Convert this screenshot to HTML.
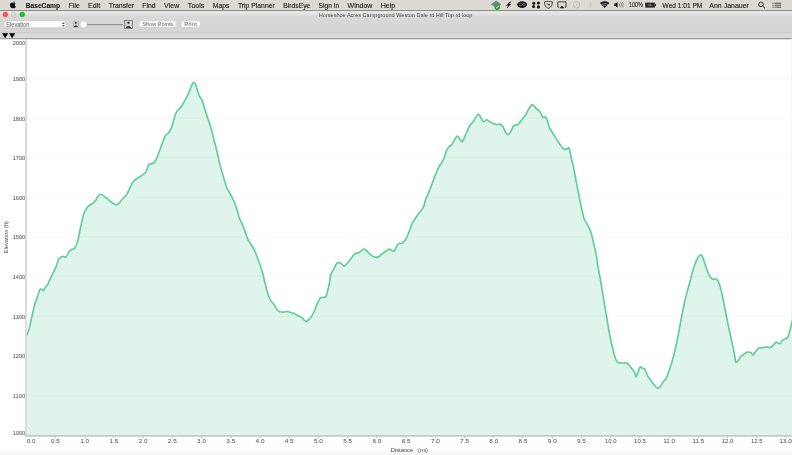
<!DOCTYPE html>
<html><head><meta charset="utf-8">
<style>
*{margin:0;padding:0;box-sizing:border-box}
html,body{width:792px;height:455px;overflow:hidden;background:#fff;font-family:"Liberation Sans",sans-serif}
svg{position:absolute;left:0;top:0;font-family:"Liberation Sans",sans-serif;will-change:transform}
.g{stroke:#000;stroke-opacity:0.03;stroke-width:1}
.t{stroke:#a8a8a8;stroke-width:1}
.m{font-size:7.5px;fill:#1a1a1a;stroke:#1a1a1a;stroke-width:0.12px}
.yl{font-size:6.2px;fill:#4a4a4a}
.xl{font-size:6.2px;fill:#4a4a4a}
</style></head><body>
<svg width="792" height="455" viewBox="0 0 792 455">
  <defs>
    <linearGradient id="tb" x1="0" y1="0" x2="0" y2="1">
      <stop offset="0" stop-color="#e7e7e7"/><stop offset="0.12" stop-color="#e4e4e4"/><stop offset="0.25" stop-color="#d8d8d8"/><stop offset="1" stop-color="#d5d5d5"/>
    </linearGradient>
    <linearGradient id="bt" x1="0" y1="0" x2="0" y2="1"><stop offset="0" stop-color="#ffffff"/><stop offset="1" stop-color="#f3f3f3"/></linearGradient>
    <linearGradient id="st" x1="0" y1="0" x2="0" y2="1"><stop offset="0" stop-color="#d8d8d8"/><stop offset="0.7" stop-color="#d9d9d9"/><stop offset="1" stop-color="#e0e0e0"/></linearGradient>
  </defs>
  <!-- menubar -->
  <rect x="0" y="0" width="792" height="10" fill="#dddad3"/>
  <rect x="0" y="10" width="792" height="1" fill="#8f8d89"/>
  <path d="M13.2,2.9 C12.7,2.9 12.3,2.6 11.8,2.6 C10.8,2.6 10,3.5 10,4.9 C10,6.4 11,8.3 11.9,8.3 C12.4,8.3 12.6,8 13.1,8 C13.6,8 13.8,8.3 14.3,8.3 C15,8.3 15.6,7.3 15.9,6.5 C15.2,6.2 14.8,5.6 14.8,4.8 C14.8,4.1 15.2,3.6 15.7,3.3 C15.3,2.8 14.7,2.6 14.2,2.6 C13.8,2.6 13.5,2.9 13.2,2.9 Z M13.3,2.4 C13.3,1.8 13.8,1.1 14.5,1 C14.6,1.7 14,2.4 13.3,2.4 Z" fill="#111"/>
  <text x="25.65" y="7.70" textLength="34.50" lengthAdjust="spacingAndGlyphs" class="m" font-weight="bold"  xml:space="preserve">BaseCamp</text><text x="68.85" y="7.70" textLength="10.80" lengthAdjust="spacingAndGlyphs" class="m"  xml:space="preserve">File</text><text x="88.05" y="7.70" textLength="12.30" lengthAdjust="spacingAndGlyphs" class="m"  xml:space="preserve">Edit</text><text x="108.75" y="7.70" textLength="25.40" lengthAdjust="spacingAndGlyphs" class="m"  xml:space="preserve">Transfer</text><text x="142.35" y="7.70" textLength="13.30" lengthAdjust="spacingAndGlyphs" class="m"  xml:space="preserve">Find</text><text x="164.05" y="7.70" textLength="15.20" lengthAdjust="spacingAndGlyphs" class="m"  xml:space="preserve">View</text><text x="187.85" y="7.70" textLength="16.50" lengthAdjust="spacingAndGlyphs" class="m"  xml:space="preserve">Tools</text><text x="212.75" y="7.70" textLength="16.80" lengthAdjust="spacingAndGlyphs" class="m"  xml:space="preserve">Maps</text><text x="237.95" y="7.70" textLength="36.80" lengthAdjust="spacingAndGlyphs" class="m"  xml:space="preserve">Trip Planner</text><text x="283.35" y="7.70" textLength="27.00" lengthAdjust="spacingAndGlyphs" class="m"  xml:space="preserve">BirdsEye</text><text x="318.55" y="7.70" textLength="20.70" lengthAdjust="spacingAndGlyphs" class="m"  xml:space="preserve">Sign In</text><text x="347.55" y="7.70" textLength="24.80" lengthAdjust="spacingAndGlyphs" class="m"  xml:space="preserve">Window</text><text x="380.65" y="7.70" textLength="14.70" lengthAdjust="spacingAndGlyphs" class="m"  xml:space="preserve">Help</text><text x="662.55" y="7.70" textLength="39.70" lengthAdjust="spacingAndGlyphs" class="m"  xml:space="preserve">Wed 1:01 PM</text><text x="709.25" y="7.70" textLength="39.70" lengthAdjust="spacingAndGlyphs" class="m"  xml:space="preserve">Ann Janauer</text><text x="628.95" y="6.90" textLength="13.80" lengthAdjust="spacingAndGlyphs" class="m" font-size="6.0"  xml:space="preserve">100%</text>
  <!-- garmin express-like icon -->
<path d="M491.3,4.3 L496.1,0.9 L500.9,4.3 L496.1,7.4 Z" fill="#6a8598" stroke="#4f6a7e" stroke-width="0.4"/>
<circle cx="497.2" cy="7.2" r="2.7" fill="#34a52c"/>
<path d="M495.9,7.1 L496.9,8 L498.6,5.9" stroke="#fff" stroke-width="0.7" fill="none"/>
<!-- lightning -->
<path d="M509.9,1.7 L506.5,5.5 L508.4,5.5 L507,7.9 L510.9,4 L509,4 L510.9,1.7 Z" fill="#111" stroke="#111" stroke-width="0.3"/>
<!-- creative cloud -->
<ellipse cx="522.1" cy="4.6" rx="4.9" ry="3.4" fill="#1a1a1a"/>
<path d="M519.2,5 C519.2,3.2 521.8,2.9 522.4,4.4 C523,6 525.3,5.8 525.2,4.2 C525.1,2.9 523.2,2.8 522.4,4.4 C521.6,6 519.2,6.2 519.2,5 Z" stroke="#8a8a8a" stroke-width="0.55" fill="none"/>
<!-- dropbox-ish -->
<circle cx="533.8" cy="3.3" r="1.5" fill="#111"/><circle cx="538.4" cy="3.1" r="1.5" fill="#111"/>
<circle cx="533.6" cy="6.6" r="1.5" fill="#111"/><circle cx="538.4" cy="6.9" r="1.6" fill="#111"/>
<!-- shield -->
<path d="M544.6,1.8 C546.2,1.2 550.6,1.2 552.3,1.8 C552.5,5 551.2,7.6 548.4,8.3 C545.6,7.6 544.3,5 544.6,1.8 Z" fill="none" stroke="#3a3a3a" stroke-width="0.9"/>
<circle cx="549" cy="4.6" r="0.9" fill="#222"/><circle cx="547.3" cy="4" r="0.6" fill="#444"/>
<!-- airplay -->
<path d="M559.2,7.2 L557.8,7.2 L557.8,1.9 L566,1.9 L566,7.2 L564.6,7.2" fill="none" stroke="#333" stroke-width="0.9"/>
<path d="M559.6,8.2 L561.9,5.5 L564.2,8.2 Z" fill="#111"/>
<!-- time machine faded -->
<circle cx="576.6" cy="4.8" r="3.3" fill="none" stroke="#b9b8b4" stroke-width="0.8"/>
<path d="M576.6,3 L576.6,5 L577.8,5.8" stroke="#b9b8b4" stroke-width="0.6" fill="none"/>
<!-- bluetooth faded -->
<path d="M588.8,3 L592,6.3 L590.4,7.7 L590.4,1.7 L592,3.1 L588.8,6.5" fill="none" stroke="#c6c5c1" stroke-width="0.6"/>
<!-- wifi -->
<path d="M604.7,8 L599.9,3 C602.5,0.6 606.9,0.6 609.5,3 Z" fill="#222"/>
<path d="M601.5,4.6 C603.3,3.2 606.1,3.2 607.9,4.6" stroke="#e4e2dd" stroke-width="0.5" fill="none"/>
<path d="M602.8,6 C603.9,5.1 605.5,5.1 606.6,6" stroke="#e4e2dd" stroke-width="0.5" fill="none"/>
<!-- volume -->
<path d="M614.3,3.6 L615.6,3.6 L617.6,1.9 L617.6,7.7 L615.6,6 L614.3,6 Z" fill="#111"/>
<path d="M619,3.3 C619.7,4.2 619.7,5.4 619,6.3 M620.5,2.5 C621.6,3.9 621.6,5.7 620.5,7.1 M622,1.8 C623.6,3.7 623.6,5.9 622,7.8" stroke="#333" stroke-width="0.5" fill="none"/>
<!-- battery -->
<rect x="645.2" y="2.6" width="9.6" height="5" fill="#2a2a2a"/>
<rect x="654.8" y="3.9" width="1.1" height="2.4" fill="#2a2a2a"/>
<path d="M648,5.1 L652.5,5.1 M650.2,3.8 L650.2,6.4" stroke="#bbb" stroke-width="0.5"/>
<!-- search -->
<circle cx="761" cy="4.4" r="2.3" fill="none" stroke="#222" stroke-width="0.9"/>
<path d="M762.7,6.1 L765,8.3" stroke="#222" stroke-width="1"/>
<!-- list -->
<path d="M772.4,3.2 L773.6,3.2 M772.4,5.2 L773.6,5.2 M772.4,7.2 L773.6,7.2 M774.6,3.2 L781.2,3.2 M774.6,5.2 L781.2,5.2 M774.6,7.2 L781.2,7.2" stroke="#222" stroke-width="0.75"/>

  <!-- titlebar / toolbar -->
  <rect x="0" y="11" width="792" height="22" fill="url(#tb)"/>
  <rect x="0" y="32" width="792" height="1" fill="#cbcbcb"/>
  <rect x="0" y="33" width="792" height="5" fill="url(#st)"/>
  <rect x="0" y="38" width="792" height="1" fill="#9f9f9f"/>
  <rect x="0" y="39" width="792" height="1" fill="#e6e6e6"/>
  <circle cx="5.3" cy="14.4" r="2.7" fill="#fc5753"/>
  <circle cx="13.7" cy="14.4" r="2.5" fill="#d6d6d6" stroke="#c4c4c4" stroke-width="0.5"/>
  <circle cx="22.3" cy="14.4" r="2.7" fill="#1dbd3a"/>
  <text x="318.85" y="16.70" textLength="153.60" lengthAdjust="spacingAndGlyphs" font-size="5.6" fill="#505050"  xml:space="preserve">Horseshoe Acres Campground Weston Dale rd Hill Top rd loop</text>
  <!-- dropdown -->
  <rect x="4.2" y="21" width="62" height="7" rx="1.5" fill="#000" opacity="0.12" transform="translate(0,0.5)"/>
  <rect x="4.2" y="20.9" width="61.7" height="6.9" rx="1.5" fill="#fdfdfd" stroke="#c4c4c4" stroke-width="0.4"/>
  <path d="M61.9,23.9 L63.35,21.9 L64.8,23.9 Z M61.9,25 L63.35,27 L64.8,25 Z" fill="#5e5e5e"/>
  <!-- slider -->
  <rect x="73.2" y="21.2" width="5.6" height="6" fill="#cdcdcd" stroke="#a4a4a4" stroke-width="0.5"/>
  <circle cx="75.9" cy="23" r="0.9" fill="#444"/><path d="M73.9,27 C74.2,25 77.6,25 77.9,27 Z" fill="#333"/>
  <rect x="86" y="24" width="37" height="1.2" fill="#939393"/>
  <circle cx="83.8" cy="25" r="3.8" fill="#000" opacity="0.12"/>
  <circle cx="83.6" cy="24.5" r="3.5" fill="#ffffff" stroke="#bdbdbd" stroke-width="0.35"/>
  <rect x="124.4" y="20.4" width="8" height="8" fill="#d0d0d0" stroke="#777" stroke-width="0.8"/>
  <circle cx="128.4" cy="22.8" r="1.1" fill="#333"/><path d="M125.8,28 C126,25.2 130.8,25.2 131,28 Z" fill="#333"/>
  <!-- buttons -->
  <rect x="139.6" y="21.8" width="36" height="6" rx="1.5" fill="#000" opacity="0.12"/>
  <rect x="139.6" y="21.2" width="36" height="6" rx="1.5" fill="#fcfcfc"/>
  <rect x="181.5" y="21.8" width="18.4" height="6" rx="1.5" fill="#000" opacity="0.12"/>
  <rect x="181.5" y="21.2" width="18.4" height="6" rx="1.5" fill="#fcfcfc"/>
  <text x="6.35" y="26.70" textLength="23.00" lengthAdjust="spacingAndGlyphs" font-size="6.4" fill="#5a5a5a"  xml:space="preserve">Elevation</text><text x="142.25" y="26.10" textLength="31.00" lengthAdjust="spacingAndGlyphs" font-size="5.6" fill="#5f5f5f"  xml:space="preserve">Show Points</text><text x="184.15" y="26.10" textLength="12.80" lengthAdjust="spacingAndGlyphs" font-size="5.6" fill="#5f5f5f"  xml:space="preserve">Print</text>
  <!-- triangles -->
  <path d="M2,33.2 L8.2,33.2 L5.1,38.2 Z M9,33.2 L15.2,33.2 L12.1,38.2 Z" fill="#000"/>
  <!-- plot -->
  <rect x="0" y="449" width="792" height="6" fill="url(#bt)"/>
  <rect x="791" y="39" width="1" height="397" fill="#eef8f3"/>
  <path d="M26.60,335.20 C26.97,334.33 28.08,332.37 28.80,330.00 C29.52,327.63 30.13,324.33 30.90,321.00 C31.67,317.67 32.75,312.75 33.40,310.00 C34.05,307.25 34.07,306.90 34.80,304.50 C35.53,302.10 36.97,298.08 37.80,295.60 C38.63,293.12 39.15,290.67 39.80,289.60 C40.45,288.53 41.05,289.03 41.70,289.20 C42.35,289.37 43.03,291.02 43.70,290.60 C44.37,290.18 45.03,287.68 45.70,286.70 C46.37,285.72 46.72,286.52 47.70,284.70 C48.68,282.88 50.28,278.60 51.60,275.80 C52.92,273.00 54.38,270.72 55.60,267.90 C56.82,265.08 57.70,260.82 58.90,258.90 C60.10,256.98 61.65,256.72 62.80,256.40 C63.95,256.08 64.80,257.73 65.80,257.00 C66.80,256.27 67.82,253.27 68.80,252.00 C69.78,250.73 70.72,250.05 71.70,249.40 C72.68,248.75 73.70,249.48 74.70,248.10 C75.70,246.72 76.72,244.57 77.70,241.10 C78.68,237.63 79.62,231.73 80.60,227.30 C81.58,222.87 82.60,217.63 83.60,214.50 C84.60,211.37 85.62,210.05 86.60,208.50 C87.58,206.95 88.52,206.02 89.50,205.20 C90.48,204.38 91.50,204.37 92.50,203.60 C93.50,202.83 94.52,201.92 95.50,200.60 C96.48,199.28 97.48,196.75 98.40,195.70 C99.32,194.65 100.02,194.20 101.00,194.30 C101.98,194.40 103.08,195.42 104.30,196.30 C105.52,197.18 107.13,198.62 108.30,199.60 C109.47,200.58 110.32,201.47 111.30,202.20 C112.28,202.93 113.22,203.60 114.20,204.00 C115.18,204.40 116.37,204.73 117.20,204.60 C118.03,204.47 118.38,204.10 119.20,203.20 C120.02,202.30 120.95,200.52 122.10,199.20 C123.25,197.88 124.95,196.87 126.10,195.30 C127.25,193.73 127.85,192.03 129.00,189.80 C130.15,187.57 131.67,183.82 133.00,181.90 C134.33,179.98 135.68,179.23 137.00,178.30 C138.32,177.37 139.58,177.18 140.90,176.30 C142.22,175.42 143.92,174.05 144.90,173.00 C145.88,171.95 146.13,171.45 146.80,170.00 C147.47,168.55 147.73,165.47 148.90,164.30 C150.07,163.13 152.48,164.05 153.80,163.00 C155.12,161.95 155.80,160.15 156.80,158.00 C157.80,155.85 158.82,152.73 159.80,150.10 C160.78,147.47 161.72,144.67 162.70,142.20 C163.68,139.73 164.70,136.88 165.70,135.30 C166.70,133.72 167.78,133.85 168.70,132.70 C169.62,131.55 170.38,130.43 171.20,128.40 C172.02,126.37 172.80,123.07 173.60,120.50 C174.40,117.93 175.18,114.82 176.00,113.00 C176.82,111.18 177.58,110.73 178.50,109.60 C179.42,108.47 180.50,107.62 181.50,106.20 C182.50,104.78 183.52,102.83 184.50,101.10 C185.48,99.37 186.42,97.85 187.40,95.80 C188.38,93.75 189.47,90.95 190.40,88.80 C191.33,86.65 192.18,83.72 193.00,82.90 C193.82,82.08 194.58,82.75 195.30,83.90 C196.02,85.05 196.63,87.82 197.30,89.80 C197.97,91.78 198.47,93.98 199.30,95.80 C200.13,97.62 201.32,98.23 202.30,100.70 C203.28,103.17 204.22,107.47 205.20,110.60 C206.18,113.73 207.22,116.53 208.20,119.50 C209.18,122.47 210.12,124.95 211.10,128.40 C212.08,131.85 213.10,136.25 214.10,140.20 C215.10,144.15 216.12,147.98 217.10,152.10 C218.08,156.22 218.90,160.62 220.00,164.90 C221.10,169.18 222.58,174.00 223.70,177.80 C224.82,181.60 225.72,185.23 226.70,187.70 C227.68,190.17 228.45,190.47 229.60,192.60 C230.75,194.73 232.43,197.87 233.60,200.50 C234.77,203.13 235.62,205.43 236.60,208.40 C237.58,211.37 238.35,215.17 239.50,218.30 C240.65,221.43 242.18,223.90 243.50,227.20 C244.82,230.50 246.12,235.22 247.40,238.10 C248.68,240.98 249.97,242.37 251.20,244.50 C252.43,246.63 253.70,248.52 254.80,250.90 C255.90,253.28 256.65,255.65 257.80,258.80 C258.95,261.95 260.58,266.18 261.70,269.80 C262.82,273.42 263.68,277.22 264.50,280.50 C265.32,283.78 265.85,286.75 266.60,289.50 C267.35,292.25 268.20,294.98 269.00,297.00 C269.80,299.02 270.72,300.57 271.40,301.60 C272.08,302.63 272.42,302.30 273.10,303.20 C273.78,304.10 274.72,305.80 275.50,307.00 C276.28,308.20 277.08,309.62 277.80,310.40 C278.52,311.18 278.85,311.42 279.80,311.70 C280.75,311.98 282.23,312.13 283.50,312.10 C284.77,312.07 286.08,311.40 287.40,311.50 C288.72,311.60 290.25,312.37 291.40,312.70 C292.55,313.03 293.32,313.03 294.30,313.50 C295.28,313.97 296.13,314.90 297.30,315.50 C298.47,316.10 300.32,316.50 301.30,317.10 C302.28,317.70 302.45,318.38 303.20,319.10 C303.95,319.82 304.97,321.25 305.80,321.40 C306.63,321.55 307.32,320.72 308.20,320.00 C309.08,319.28 310.12,318.52 311.10,317.10 C312.08,315.68 313.10,313.65 314.10,311.50 C315.10,309.35 316.12,306.40 317.10,304.20 C318.08,302.00 319.02,299.45 320.00,298.30 C320.98,297.15 322.00,297.63 323.00,297.30 C324.00,296.97 325.02,298.27 326.00,296.30 C326.98,294.33 328.08,289.12 328.90,285.50 C329.72,281.88 330.07,277.40 330.90,274.60 C331.73,271.80 332.92,270.58 333.90,268.70 C334.88,266.82 335.82,264.30 336.80,263.30 C337.78,262.30 338.97,262.57 339.80,262.70 C340.63,262.83 341.05,263.53 341.80,264.10 C342.55,264.67 343.32,266.33 344.30,266.10 C345.28,265.87 346.47,264.08 347.70,262.70 C348.93,261.32 350.55,259.28 351.70,257.80 C352.85,256.32 353.45,254.63 354.60,253.80 C355.75,252.97 357.42,253.37 358.60,252.80 C359.78,252.23 360.78,251.03 361.70,250.40 C362.62,249.77 363.10,248.77 364.10,249.00 C365.10,249.23 366.45,250.68 367.70,251.80 C368.95,252.92 370.45,254.85 371.60,255.70 C372.75,256.55 373.45,256.70 374.60,256.90 C375.75,257.10 377.18,257.48 378.50,256.90 C379.82,256.32 381.18,254.38 382.50,253.40 C383.82,252.42 385.32,251.73 386.40,251.00 C387.48,250.27 388.10,249.10 389.00,249.00 C389.90,248.90 390.92,250.07 391.80,250.40 C392.68,250.73 393.38,251.88 394.30,251.00 C395.22,250.12 396.47,246.35 397.30,245.10 C398.13,243.85 398.47,243.83 399.30,243.50 C400.13,243.17 401.15,243.93 402.30,243.10 C403.45,242.27 405.05,240.42 406.20,238.50 C407.35,236.58 408.22,234.07 409.20,231.60 C410.18,229.13 411.12,225.83 412.10,223.70 C413.08,221.57 414.10,220.38 415.10,218.80 C416.10,217.22 417.12,215.52 418.10,214.20 C419.08,212.88 420.02,212.28 421.00,210.90 C421.98,209.52 423.27,207.72 424.00,205.90 C424.73,204.08 424.43,202.67 425.40,200.00 C426.37,197.33 428.58,192.90 429.80,189.90 C431.02,186.90 431.72,184.63 432.70,182.00 C433.68,179.37 434.70,176.57 435.70,174.10 C436.70,171.63 437.72,169.08 438.70,167.20 C439.68,165.32 440.72,164.28 441.60,162.80 C442.48,161.32 443.17,160.37 444.00,158.30 C444.83,156.23 445.68,152.38 446.60,150.40 C447.52,148.42 448.62,147.38 449.50,146.40 C450.38,145.42 451.07,145.58 451.90,144.50 C452.73,143.42 453.58,141.32 454.50,139.90 C455.42,138.48 456.52,136.13 457.40,136.00 C458.28,135.87 458.97,138.18 459.80,139.10 C460.63,140.02 461.48,142.08 462.40,141.50 C463.32,140.92 464.32,137.73 465.30,135.60 C466.28,133.47 467.47,130.52 468.30,128.70 C469.13,126.88 469.48,125.87 470.30,124.70 C471.12,123.53 472.22,123.02 473.20,121.70 C474.18,120.38 475.30,118.05 476.20,116.80 C477.10,115.55 477.83,114.03 478.60,114.20 C479.37,114.37 479.98,116.55 480.80,117.80 C481.62,119.05 482.52,121.37 483.50,121.70 C484.48,122.03 485.62,119.73 486.70,119.80 C487.78,119.87 488.78,121.45 490.00,122.10 C491.22,122.75 492.83,123.27 494.00,123.70 C495.17,124.13 496.02,124.63 497.00,124.70 C497.98,124.77 498.92,123.77 499.90,124.10 C500.88,124.43 501.92,125.28 502.90,126.70 C503.88,128.12 504.92,131.28 505.80,132.60 C506.68,133.92 507.37,134.77 508.20,134.60 C509.03,134.43 509.87,133.08 510.80,131.60 C511.73,130.12 512.65,126.85 513.80,125.70 C514.95,124.55 516.38,125.68 517.70,124.70 C519.02,123.72 520.38,121.45 521.70,119.80 C523.02,118.15 524.52,116.45 525.60,114.80 C526.68,113.15 527.20,111.57 528.20,109.90 C529.20,108.23 530.63,105.48 531.60,104.80 C532.57,104.12 533.17,105.13 534.00,105.80 C534.83,106.47 535.68,107.88 536.60,108.80 C537.52,109.72 538.62,110.15 539.50,111.30 C540.38,112.45 541.30,114.63 541.90,115.70 C542.50,116.77 542.57,117.53 543.10,117.70 C543.63,117.87 544.45,116.38 545.10,116.70 C545.75,117.02 546.28,117.80 547.00,119.60 C547.72,121.40 548.50,125.35 549.40,127.50 C550.30,129.65 551.42,130.85 552.40,132.50 C553.38,134.15 554.32,135.85 555.30,137.40 C556.28,138.95 557.30,140.32 558.30,141.80 C559.30,143.28 560.32,145.05 561.30,146.30 C562.28,147.55 563.28,148.87 564.20,149.30 C565.12,149.73 565.97,149.07 566.80,148.90 C567.63,148.73 568.48,146.92 569.20,148.30 C569.92,149.68 570.38,154.07 571.10,157.20 C571.82,160.33 572.60,162.80 573.50,167.10 C574.40,171.40 575.45,177.58 576.50,183.00 C577.55,188.42 578.60,193.87 579.80,199.60 C581.00,205.33 582.55,213.43 583.70,217.40 C584.85,221.37 585.55,221.08 586.70,223.40 C587.85,225.72 589.45,228.02 590.60,231.30 C591.75,234.58 592.60,238.82 593.60,243.10 C594.60,247.38 595.90,253.22 596.60,257.00 C597.30,260.78 597.10,261.70 597.80,265.80 C598.50,269.90 599.82,276.00 600.80,281.60 C601.78,287.20 602.72,293.47 603.70,299.40 C604.68,305.33 605.67,311.13 606.70,317.20 C607.73,323.27 608.88,330.55 609.90,335.80 C610.92,341.05 611.82,344.75 612.80,348.70 C613.78,352.65 614.90,357.20 615.80,359.50 C616.70,361.80 617.22,361.90 618.20,362.50 C619.18,363.10 620.28,363.00 621.70,363.10 C623.12,363.20 625.38,362.65 626.70,363.10 C628.02,363.55 628.62,364.68 629.60,365.80 C630.58,366.92 631.77,368.70 632.60,369.80 C633.43,370.90 634.00,371.22 634.60,372.40 C635.20,373.58 635.62,377.00 636.20,376.90 C636.78,376.80 637.45,373.45 638.10,371.80 C638.75,370.15 639.37,367.57 640.10,367.00 C640.83,366.43 641.77,368.07 642.50,368.40 C643.23,368.73 643.85,368.23 644.50,369.00 C645.15,369.77 645.75,371.62 646.40,373.00 C647.05,374.38 647.57,375.98 648.40,377.30 C649.23,378.62 650.42,379.58 651.40,380.90 C652.38,382.22 653.25,383.98 654.30,385.20 C655.35,386.42 656.70,387.93 657.70,388.20 C658.70,388.47 659.38,387.88 660.30,386.80 C661.22,385.72 662.22,383.12 663.20,381.70 C664.18,380.28 665.20,380.18 666.20,378.30 C667.20,376.42 668.22,373.20 669.20,370.40 C670.18,367.60 671.12,364.97 672.10,361.50 C673.08,358.03 674.10,353.88 675.10,349.60 C676.10,345.32 676.97,341.55 678.10,335.80 C679.23,330.05 680.78,320.85 681.90,315.10 C683.02,309.35 683.82,305.58 684.80,301.30 C685.78,297.02 686.80,293.20 687.80,289.40 C688.80,285.60 689.82,282.12 690.80,278.50 C691.78,274.88 692.72,270.82 693.70,267.70 C694.68,264.58 695.70,261.85 696.70,259.80 C697.70,257.75 698.82,256.07 699.70,255.40 C700.58,254.73 701.18,254.58 702.00,255.80 C702.82,257.02 703.67,260.07 704.60,262.70 C705.53,265.33 706.62,269.18 707.60,271.60 C708.58,274.02 709.58,275.88 710.50,277.20 C711.42,278.52 712.27,279.28 713.10,279.50 C713.93,279.72 714.62,278.17 715.50,278.50 C716.38,278.83 717.42,279.35 718.40,281.50 C719.38,283.65 720.50,287.82 721.40,291.40 C722.30,294.98 722.90,298.57 723.80,303.00 C724.70,307.43 726.05,314.22 726.80,318.00 C727.55,321.78 727.55,322.12 728.30,325.70 C729.05,329.28 730.30,334.88 731.30,339.50 C732.30,344.12 733.58,349.70 734.30,353.40 C735.02,357.10 735.05,360.32 735.60,361.70 C736.15,363.08 736.83,362.43 737.60,361.70 C738.37,360.97 739.28,358.43 740.20,357.30 C741.12,356.17 742.02,355.72 743.10,354.90 C744.18,354.08 745.43,352.82 746.70,352.40 C747.97,351.98 749.65,351.98 750.70,352.40 C751.75,352.82 752.12,355.13 753.00,354.90 C753.88,354.67 755.00,352.15 756.00,351.00 C757.00,349.85 757.85,348.53 759.00,348.00 C760.15,347.47 761.58,348.00 762.90,347.80 C764.22,347.60 765.68,346.80 766.90,346.80 C768.12,346.80 769.15,348.08 770.20,347.80 C771.25,347.52 772.18,346.05 773.20,345.10 C774.22,344.15 775.22,342.30 776.30,342.10 C777.38,341.90 778.70,344.17 779.70,343.90 C780.70,343.63 781.42,341.30 782.30,340.50 C783.18,339.70 784.12,339.60 785.00,339.10 C785.88,338.60 786.83,338.75 787.60,337.50 C788.37,336.25 788.93,333.90 789.60,331.60 C790.27,329.30 791.03,325.97 791.60,323.70 C792.17,321.43 792.77,318.95 793.00,318.00 L793,436 L26.6,436 Z" fill="#dff5eb"/>
  <line x1="27" y1="395.5" x2="792" y2="395.5" class="g"/><line x1="27" y1="355.9" x2="792" y2="355.9" class="g"/><line x1="27" y1="316.2" x2="792" y2="316.2" class="g"/><line x1="27" y1="276.6" x2="792" y2="276.6" class="g"/><line x1="27" y1="237.0" x2="792" y2="237.0" class="g"/><line x1="27" y1="197.4" x2="792" y2="197.4" class="g"/><line x1="27" y1="157.7" x2="792" y2="157.7" class="g"/><line x1="27" y1="118.1" x2="792" y2="118.1" class="g"/><line x1="27" y1="78.5" x2="792" y2="78.5" class="g"/><line x1="27" y1="38.9" x2="792" y2="38.9" class="g"/>
  <path d="M26.60,335.20 C26.97,334.33 28.08,332.37 28.80,330.00 C29.52,327.63 30.13,324.33 30.90,321.00 C31.67,317.67 32.75,312.75 33.40,310.00 C34.05,307.25 34.07,306.90 34.80,304.50 C35.53,302.10 36.97,298.08 37.80,295.60 C38.63,293.12 39.15,290.67 39.80,289.60 C40.45,288.53 41.05,289.03 41.70,289.20 C42.35,289.37 43.03,291.02 43.70,290.60 C44.37,290.18 45.03,287.68 45.70,286.70 C46.37,285.72 46.72,286.52 47.70,284.70 C48.68,282.88 50.28,278.60 51.60,275.80 C52.92,273.00 54.38,270.72 55.60,267.90 C56.82,265.08 57.70,260.82 58.90,258.90 C60.10,256.98 61.65,256.72 62.80,256.40 C63.95,256.08 64.80,257.73 65.80,257.00 C66.80,256.27 67.82,253.27 68.80,252.00 C69.78,250.73 70.72,250.05 71.70,249.40 C72.68,248.75 73.70,249.48 74.70,248.10 C75.70,246.72 76.72,244.57 77.70,241.10 C78.68,237.63 79.62,231.73 80.60,227.30 C81.58,222.87 82.60,217.63 83.60,214.50 C84.60,211.37 85.62,210.05 86.60,208.50 C87.58,206.95 88.52,206.02 89.50,205.20 C90.48,204.38 91.50,204.37 92.50,203.60 C93.50,202.83 94.52,201.92 95.50,200.60 C96.48,199.28 97.48,196.75 98.40,195.70 C99.32,194.65 100.02,194.20 101.00,194.30 C101.98,194.40 103.08,195.42 104.30,196.30 C105.52,197.18 107.13,198.62 108.30,199.60 C109.47,200.58 110.32,201.47 111.30,202.20 C112.28,202.93 113.22,203.60 114.20,204.00 C115.18,204.40 116.37,204.73 117.20,204.60 C118.03,204.47 118.38,204.10 119.20,203.20 C120.02,202.30 120.95,200.52 122.10,199.20 C123.25,197.88 124.95,196.87 126.10,195.30 C127.25,193.73 127.85,192.03 129.00,189.80 C130.15,187.57 131.67,183.82 133.00,181.90 C134.33,179.98 135.68,179.23 137.00,178.30 C138.32,177.37 139.58,177.18 140.90,176.30 C142.22,175.42 143.92,174.05 144.90,173.00 C145.88,171.95 146.13,171.45 146.80,170.00 C147.47,168.55 147.73,165.47 148.90,164.30 C150.07,163.13 152.48,164.05 153.80,163.00 C155.12,161.95 155.80,160.15 156.80,158.00 C157.80,155.85 158.82,152.73 159.80,150.10 C160.78,147.47 161.72,144.67 162.70,142.20 C163.68,139.73 164.70,136.88 165.70,135.30 C166.70,133.72 167.78,133.85 168.70,132.70 C169.62,131.55 170.38,130.43 171.20,128.40 C172.02,126.37 172.80,123.07 173.60,120.50 C174.40,117.93 175.18,114.82 176.00,113.00 C176.82,111.18 177.58,110.73 178.50,109.60 C179.42,108.47 180.50,107.62 181.50,106.20 C182.50,104.78 183.52,102.83 184.50,101.10 C185.48,99.37 186.42,97.85 187.40,95.80 C188.38,93.75 189.47,90.95 190.40,88.80 C191.33,86.65 192.18,83.72 193.00,82.90 C193.82,82.08 194.58,82.75 195.30,83.90 C196.02,85.05 196.63,87.82 197.30,89.80 C197.97,91.78 198.47,93.98 199.30,95.80 C200.13,97.62 201.32,98.23 202.30,100.70 C203.28,103.17 204.22,107.47 205.20,110.60 C206.18,113.73 207.22,116.53 208.20,119.50 C209.18,122.47 210.12,124.95 211.10,128.40 C212.08,131.85 213.10,136.25 214.10,140.20 C215.10,144.15 216.12,147.98 217.10,152.10 C218.08,156.22 218.90,160.62 220.00,164.90 C221.10,169.18 222.58,174.00 223.70,177.80 C224.82,181.60 225.72,185.23 226.70,187.70 C227.68,190.17 228.45,190.47 229.60,192.60 C230.75,194.73 232.43,197.87 233.60,200.50 C234.77,203.13 235.62,205.43 236.60,208.40 C237.58,211.37 238.35,215.17 239.50,218.30 C240.65,221.43 242.18,223.90 243.50,227.20 C244.82,230.50 246.12,235.22 247.40,238.10 C248.68,240.98 249.97,242.37 251.20,244.50 C252.43,246.63 253.70,248.52 254.80,250.90 C255.90,253.28 256.65,255.65 257.80,258.80 C258.95,261.95 260.58,266.18 261.70,269.80 C262.82,273.42 263.68,277.22 264.50,280.50 C265.32,283.78 265.85,286.75 266.60,289.50 C267.35,292.25 268.20,294.98 269.00,297.00 C269.80,299.02 270.72,300.57 271.40,301.60 C272.08,302.63 272.42,302.30 273.10,303.20 C273.78,304.10 274.72,305.80 275.50,307.00 C276.28,308.20 277.08,309.62 277.80,310.40 C278.52,311.18 278.85,311.42 279.80,311.70 C280.75,311.98 282.23,312.13 283.50,312.10 C284.77,312.07 286.08,311.40 287.40,311.50 C288.72,311.60 290.25,312.37 291.40,312.70 C292.55,313.03 293.32,313.03 294.30,313.50 C295.28,313.97 296.13,314.90 297.30,315.50 C298.47,316.10 300.32,316.50 301.30,317.10 C302.28,317.70 302.45,318.38 303.20,319.10 C303.95,319.82 304.97,321.25 305.80,321.40 C306.63,321.55 307.32,320.72 308.20,320.00 C309.08,319.28 310.12,318.52 311.10,317.10 C312.08,315.68 313.10,313.65 314.10,311.50 C315.10,309.35 316.12,306.40 317.10,304.20 C318.08,302.00 319.02,299.45 320.00,298.30 C320.98,297.15 322.00,297.63 323.00,297.30 C324.00,296.97 325.02,298.27 326.00,296.30 C326.98,294.33 328.08,289.12 328.90,285.50 C329.72,281.88 330.07,277.40 330.90,274.60 C331.73,271.80 332.92,270.58 333.90,268.70 C334.88,266.82 335.82,264.30 336.80,263.30 C337.78,262.30 338.97,262.57 339.80,262.70 C340.63,262.83 341.05,263.53 341.80,264.10 C342.55,264.67 343.32,266.33 344.30,266.10 C345.28,265.87 346.47,264.08 347.70,262.70 C348.93,261.32 350.55,259.28 351.70,257.80 C352.85,256.32 353.45,254.63 354.60,253.80 C355.75,252.97 357.42,253.37 358.60,252.80 C359.78,252.23 360.78,251.03 361.70,250.40 C362.62,249.77 363.10,248.77 364.10,249.00 C365.10,249.23 366.45,250.68 367.70,251.80 C368.95,252.92 370.45,254.85 371.60,255.70 C372.75,256.55 373.45,256.70 374.60,256.90 C375.75,257.10 377.18,257.48 378.50,256.90 C379.82,256.32 381.18,254.38 382.50,253.40 C383.82,252.42 385.32,251.73 386.40,251.00 C387.48,250.27 388.10,249.10 389.00,249.00 C389.90,248.90 390.92,250.07 391.80,250.40 C392.68,250.73 393.38,251.88 394.30,251.00 C395.22,250.12 396.47,246.35 397.30,245.10 C398.13,243.85 398.47,243.83 399.30,243.50 C400.13,243.17 401.15,243.93 402.30,243.10 C403.45,242.27 405.05,240.42 406.20,238.50 C407.35,236.58 408.22,234.07 409.20,231.60 C410.18,229.13 411.12,225.83 412.10,223.70 C413.08,221.57 414.10,220.38 415.10,218.80 C416.10,217.22 417.12,215.52 418.10,214.20 C419.08,212.88 420.02,212.28 421.00,210.90 C421.98,209.52 423.27,207.72 424.00,205.90 C424.73,204.08 424.43,202.67 425.40,200.00 C426.37,197.33 428.58,192.90 429.80,189.90 C431.02,186.90 431.72,184.63 432.70,182.00 C433.68,179.37 434.70,176.57 435.70,174.10 C436.70,171.63 437.72,169.08 438.70,167.20 C439.68,165.32 440.72,164.28 441.60,162.80 C442.48,161.32 443.17,160.37 444.00,158.30 C444.83,156.23 445.68,152.38 446.60,150.40 C447.52,148.42 448.62,147.38 449.50,146.40 C450.38,145.42 451.07,145.58 451.90,144.50 C452.73,143.42 453.58,141.32 454.50,139.90 C455.42,138.48 456.52,136.13 457.40,136.00 C458.28,135.87 458.97,138.18 459.80,139.10 C460.63,140.02 461.48,142.08 462.40,141.50 C463.32,140.92 464.32,137.73 465.30,135.60 C466.28,133.47 467.47,130.52 468.30,128.70 C469.13,126.88 469.48,125.87 470.30,124.70 C471.12,123.53 472.22,123.02 473.20,121.70 C474.18,120.38 475.30,118.05 476.20,116.80 C477.10,115.55 477.83,114.03 478.60,114.20 C479.37,114.37 479.98,116.55 480.80,117.80 C481.62,119.05 482.52,121.37 483.50,121.70 C484.48,122.03 485.62,119.73 486.70,119.80 C487.78,119.87 488.78,121.45 490.00,122.10 C491.22,122.75 492.83,123.27 494.00,123.70 C495.17,124.13 496.02,124.63 497.00,124.70 C497.98,124.77 498.92,123.77 499.90,124.10 C500.88,124.43 501.92,125.28 502.90,126.70 C503.88,128.12 504.92,131.28 505.80,132.60 C506.68,133.92 507.37,134.77 508.20,134.60 C509.03,134.43 509.87,133.08 510.80,131.60 C511.73,130.12 512.65,126.85 513.80,125.70 C514.95,124.55 516.38,125.68 517.70,124.70 C519.02,123.72 520.38,121.45 521.70,119.80 C523.02,118.15 524.52,116.45 525.60,114.80 C526.68,113.15 527.20,111.57 528.20,109.90 C529.20,108.23 530.63,105.48 531.60,104.80 C532.57,104.12 533.17,105.13 534.00,105.80 C534.83,106.47 535.68,107.88 536.60,108.80 C537.52,109.72 538.62,110.15 539.50,111.30 C540.38,112.45 541.30,114.63 541.90,115.70 C542.50,116.77 542.57,117.53 543.10,117.70 C543.63,117.87 544.45,116.38 545.10,116.70 C545.75,117.02 546.28,117.80 547.00,119.60 C547.72,121.40 548.50,125.35 549.40,127.50 C550.30,129.65 551.42,130.85 552.40,132.50 C553.38,134.15 554.32,135.85 555.30,137.40 C556.28,138.95 557.30,140.32 558.30,141.80 C559.30,143.28 560.32,145.05 561.30,146.30 C562.28,147.55 563.28,148.87 564.20,149.30 C565.12,149.73 565.97,149.07 566.80,148.90 C567.63,148.73 568.48,146.92 569.20,148.30 C569.92,149.68 570.38,154.07 571.10,157.20 C571.82,160.33 572.60,162.80 573.50,167.10 C574.40,171.40 575.45,177.58 576.50,183.00 C577.55,188.42 578.60,193.87 579.80,199.60 C581.00,205.33 582.55,213.43 583.70,217.40 C584.85,221.37 585.55,221.08 586.70,223.40 C587.85,225.72 589.45,228.02 590.60,231.30 C591.75,234.58 592.60,238.82 593.60,243.10 C594.60,247.38 595.90,253.22 596.60,257.00 C597.30,260.78 597.10,261.70 597.80,265.80 C598.50,269.90 599.82,276.00 600.80,281.60 C601.78,287.20 602.72,293.47 603.70,299.40 C604.68,305.33 605.67,311.13 606.70,317.20 C607.73,323.27 608.88,330.55 609.90,335.80 C610.92,341.05 611.82,344.75 612.80,348.70 C613.78,352.65 614.90,357.20 615.80,359.50 C616.70,361.80 617.22,361.90 618.20,362.50 C619.18,363.10 620.28,363.00 621.70,363.10 C623.12,363.20 625.38,362.65 626.70,363.10 C628.02,363.55 628.62,364.68 629.60,365.80 C630.58,366.92 631.77,368.70 632.60,369.80 C633.43,370.90 634.00,371.22 634.60,372.40 C635.20,373.58 635.62,377.00 636.20,376.90 C636.78,376.80 637.45,373.45 638.10,371.80 C638.75,370.15 639.37,367.57 640.10,367.00 C640.83,366.43 641.77,368.07 642.50,368.40 C643.23,368.73 643.85,368.23 644.50,369.00 C645.15,369.77 645.75,371.62 646.40,373.00 C647.05,374.38 647.57,375.98 648.40,377.30 C649.23,378.62 650.42,379.58 651.40,380.90 C652.38,382.22 653.25,383.98 654.30,385.20 C655.35,386.42 656.70,387.93 657.70,388.20 C658.70,388.47 659.38,387.88 660.30,386.80 C661.22,385.72 662.22,383.12 663.20,381.70 C664.18,380.28 665.20,380.18 666.20,378.30 C667.20,376.42 668.22,373.20 669.20,370.40 C670.18,367.60 671.12,364.97 672.10,361.50 C673.08,358.03 674.10,353.88 675.10,349.60 C676.10,345.32 676.97,341.55 678.10,335.80 C679.23,330.05 680.78,320.85 681.90,315.10 C683.02,309.35 683.82,305.58 684.80,301.30 C685.78,297.02 686.80,293.20 687.80,289.40 C688.80,285.60 689.82,282.12 690.80,278.50 C691.78,274.88 692.72,270.82 693.70,267.70 C694.68,264.58 695.70,261.85 696.70,259.80 C697.70,257.75 698.82,256.07 699.70,255.40 C700.58,254.73 701.18,254.58 702.00,255.80 C702.82,257.02 703.67,260.07 704.60,262.70 C705.53,265.33 706.62,269.18 707.60,271.60 C708.58,274.02 709.58,275.88 710.50,277.20 C711.42,278.52 712.27,279.28 713.10,279.50 C713.93,279.72 714.62,278.17 715.50,278.50 C716.38,278.83 717.42,279.35 718.40,281.50 C719.38,283.65 720.50,287.82 721.40,291.40 C722.30,294.98 722.90,298.57 723.80,303.00 C724.70,307.43 726.05,314.22 726.80,318.00 C727.55,321.78 727.55,322.12 728.30,325.70 C729.05,329.28 730.30,334.88 731.30,339.50 C732.30,344.12 733.58,349.70 734.30,353.40 C735.02,357.10 735.05,360.32 735.60,361.70 C736.15,363.08 736.83,362.43 737.60,361.70 C738.37,360.97 739.28,358.43 740.20,357.30 C741.12,356.17 742.02,355.72 743.10,354.90 C744.18,354.08 745.43,352.82 746.70,352.40 C747.97,351.98 749.65,351.98 750.70,352.40 C751.75,352.82 752.12,355.13 753.00,354.90 C753.88,354.67 755.00,352.15 756.00,351.00 C757.00,349.85 757.85,348.53 759.00,348.00 C760.15,347.47 761.58,348.00 762.90,347.80 C764.22,347.60 765.68,346.80 766.90,346.80 C768.12,346.80 769.15,348.08 770.20,347.80 C771.25,347.52 772.18,346.05 773.20,345.10 C774.22,344.15 775.22,342.30 776.30,342.10 C777.38,341.90 778.70,344.17 779.70,343.90 C780.70,343.63 781.42,341.30 782.30,340.50 C783.18,339.70 784.12,339.60 785.00,339.10 C785.88,338.60 786.83,338.75 787.60,337.50 C788.37,336.25 788.93,333.90 789.60,331.60 C790.27,329.30 791.03,325.97 791.60,323.70 C792.17,321.43 792.77,318.95 793.00,318.00" fill="none" stroke="#5ecf97" stroke-width="1.65" stroke-linejoin="round"/>
  <line x1="26.0" y1="39" x2="26.0" y2="436.7" stroke="#d4d4d4" stroke-width="1.6"/>
  <line x1="25.2" y1="435.9" x2="792" y2="435.9" stroke="#c6c9c7" stroke-width="1.6"/>
  <line x1="55.4" y1="436.5" x2="55.4" y2="437.8" class="t"/><line x1="84.7" y1="436.5" x2="84.7" y2="437.8" class="t"/><line x1="113.9" y1="436.5" x2="113.9" y2="437.8" class="t"/><line x1="143.1" y1="436.5" x2="143.1" y2="437.8" class="t"/><line x1="172.3" y1="436.5" x2="172.3" y2="437.8" class="t"/><line x1="201.6" y1="436.5" x2="201.6" y2="437.8" class="t"/><line x1="230.8" y1="436.5" x2="230.8" y2="437.8" class="t"/><line x1="260.0" y1="436.5" x2="260.0" y2="437.8" class="t"/><line x1="289.2" y1="436.5" x2="289.2" y2="437.8" class="t"/><line x1="318.4" y1="436.5" x2="318.4" y2="437.8" class="t"/><line x1="347.7" y1="436.5" x2="347.7" y2="437.8" class="t"/><line x1="376.9" y1="436.5" x2="376.9" y2="437.8" class="t"/><line x1="406.1" y1="436.5" x2="406.1" y2="437.8" class="t"/><line x1="435.4" y1="436.5" x2="435.4" y2="437.8" class="t"/><line x1="464.6" y1="436.5" x2="464.6" y2="437.8" class="t"/><line x1="493.8" y1="436.5" x2="493.8" y2="437.8" class="t"/><line x1="523.0" y1="436.5" x2="523.0" y2="437.8" class="t"/><line x1="552.3" y1="436.5" x2="552.3" y2="437.8" class="t"/><line x1="581.5" y1="436.5" x2="581.5" y2="437.8" class="t"/><line x1="610.7" y1="436.5" x2="610.7" y2="437.8" class="t"/><line x1="639.9" y1="436.5" x2="639.9" y2="437.8" class="t"/><line x1="669.2" y1="436.5" x2="669.2" y2="437.8" class="t"/><line x1="698.4" y1="436.5" x2="698.4" y2="437.8" class="t"/><line x1="727.6" y1="436.5" x2="727.6" y2="437.8" class="t"/><line x1="756.8" y1="436.5" x2="756.8" y2="437.8" class="t"/><line x1="786.1" y1="436.5" x2="786.1" y2="437.8" class="t"/>
  <text x="12.65" y="434.80" textLength="12.60" lengthAdjust="spacingAndGlyphs" class="yl"  xml:space="preserve">1000</text><text x="12.65" y="397.88" textLength="12.60" lengthAdjust="spacingAndGlyphs" class="yl"  xml:space="preserve">1100</text><text x="12.65" y="358.25" textLength="12.60" lengthAdjust="spacingAndGlyphs" class="yl"  xml:space="preserve">1200</text><text x="12.65" y="318.62" textLength="12.60" lengthAdjust="spacingAndGlyphs" class="yl"  xml:space="preserve">1300</text><text x="12.65" y="279.00" textLength="12.60" lengthAdjust="spacingAndGlyphs" class="yl"  xml:space="preserve">1400</text><text x="12.65" y="239.38" textLength="12.60" lengthAdjust="spacingAndGlyphs" class="yl"  xml:space="preserve">1500</text><text x="12.65" y="199.75" textLength="12.60" lengthAdjust="spacingAndGlyphs" class="yl"  xml:space="preserve">1600</text><text x="12.65" y="160.13" textLength="12.60" lengthAdjust="spacingAndGlyphs" class="yl"  xml:space="preserve">1700</text><text x="12.65" y="120.50" textLength="12.60" lengthAdjust="spacingAndGlyphs" class="yl"  xml:space="preserve">1800</text><text x="12.65" y="80.88" textLength="12.60" lengthAdjust="spacingAndGlyphs" class="yl"  xml:space="preserve">1900</text><text x="12.65" y="44.80" textLength="12.60" lengthAdjust="spacingAndGlyphs" class="yl"  xml:space="preserve">2000</text>
  <text x="26.65" y="443.40" textLength="8.80" lengthAdjust="spacingAndGlyphs" class="xl"  xml:space="preserve">0.0</text><text x="50.97" y="443.40" textLength="8.90" lengthAdjust="spacingAndGlyphs" class="xl"  xml:space="preserve">0.5</text><text x="80.20" y="443.40" textLength="8.90" lengthAdjust="spacingAndGlyphs" class="xl"  xml:space="preserve">1.0</text><text x="109.43" y="443.40" textLength="8.90" lengthAdjust="spacingAndGlyphs" class="xl"  xml:space="preserve">1.5</text><text x="138.65" y="443.40" textLength="8.90" lengthAdjust="spacingAndGlyphs" class="xl"  xml:space="preserve">2.0</text><text x="167.88" y="443.40" textLength="8.90" lengthAdjust="spacingAndGlyphs" class="xl"  xml:space="preserve">2.5</text><text x="197.10" y="443.40" textLength="8.90" lengthAdjust="spacingAndGlyphs" class="xl"  xml:space="preserve">3.0</text><text x="226.33" y="443.40" textLength="8.90" lengthAdjust="spacingAndGlyphs" class="xl"  xml:space="preserve">3.5</text><text x="255.55" y="443.40" textLength="8.90" lengthAdjust="spacingAndGlyphs" class="xl"  xml:space="preserve">4.0</text><text x="284.77" y="443.40" textLength="8.90" lengthAdjust="spacingAndGlyphs" class="xl"  xml:space="preserve">4.5</text><text x="314.00" y="443.40" textLength="8.90" lengthAdjust="spacingAndGlyphs" class="xl"  xml:space="preserve">5.0</text><text x="343.22" y="443.40" textLength="8.90" lengthAdjust="spacingAndGlyphs" class="xl"  xml:space="preserve">5.5</text><text x="372.45" y="443.40" textLength="8.90" lengthAdjust="spacingAndGlyphs" class="xl"  xml:space="preserve">6.0</text><text x="401.67" y="443.40" textLength="8.90" lengthAdjust="spacingAndGlyphs" class="xl"  xml:space="preserve">6.5</text><text x="430.90" y="443.40" textLength="8.90" lengthAdjust="spacingAndGlyphs" class="xl"  xml:space="preserve">7.0</text><text x="460.12" y="443.40" textLength="8.90" lengthAdjust="spacingAndGlyphs" class="xl"  xml:space="preserve">7.5</text><text x="489.35" y="443.40" textLength="8.90" lengthAdjust="spacingAndGlyphs" class="xl"  xml:space="preserve">8.0</text><text x="518.58" y="443.40" textLength="8.90" lengthAdjust="spacingAndGlyphs" class="xl"  xml:space="preserve">8.5</text><text x="547.80" y="443.40" textLength="8.90" lengthAdjust="spacingAndGlyphs" class="xl"  xml:space="preserve">9.0</text><text x="577.02" y="443.40" textLength="8.90" lengthAdjust="spacingAndGlyphs" class="xl"  xml:space="preserve">9.5</text><text x="604.90" y="443.40" textLength="11.60" lengthAdjust="spacingAndGlyphs" class="xl"  xml:space="preserve">10.0</text><text x="634.12" y="443.40" textLength="11.60" lengthAdjust="spacingAndGlyphs" class="xl"  xml:space="preserve">10.5</text><text x="663.35" y="443.40" textLength="11.60" lengthAdjust="spacingAndGlyphs" class="xl"  xml:space="preserve">11.0</text><text x="692.58" y="443.40" textLength="11.60" lengthAdjust="spacingAndGlyphs" class="xl"  xml:space="preserve">11.5</text><text x="721.80" y="443.40" textLength="11.60" lengthAdjust="spacingAndGlyphs" class="xl"  xml:space="preserve">12.0</text><text x="751.02" y="443.40" textLength="11.60" lengthAdjust="spacingAndGlyphs" class="xl"  xml:space="preserve">12.5</text><text x="779.15" y="443.40" textLength="16.20" lengthAdjust="spacingAndGlyphs" class="xl"  xml:space="preserve">13.09</text>
  <text transform="translate(7.8,253.4) rotate(-90)" font-size="5.9" fill="#4a4a4a" textLength="32.4" lengthAdjust="spacingAndGlyphs">Elevation (ft)</text>
  <text x="390.7" y="452" font-size="5.8" fill="#444" textLength="37.3" lengthAdjust="spacingAndGlyphs" xml:space="preserve">Distance   (mi)</text>
</svg>
</body></html>
